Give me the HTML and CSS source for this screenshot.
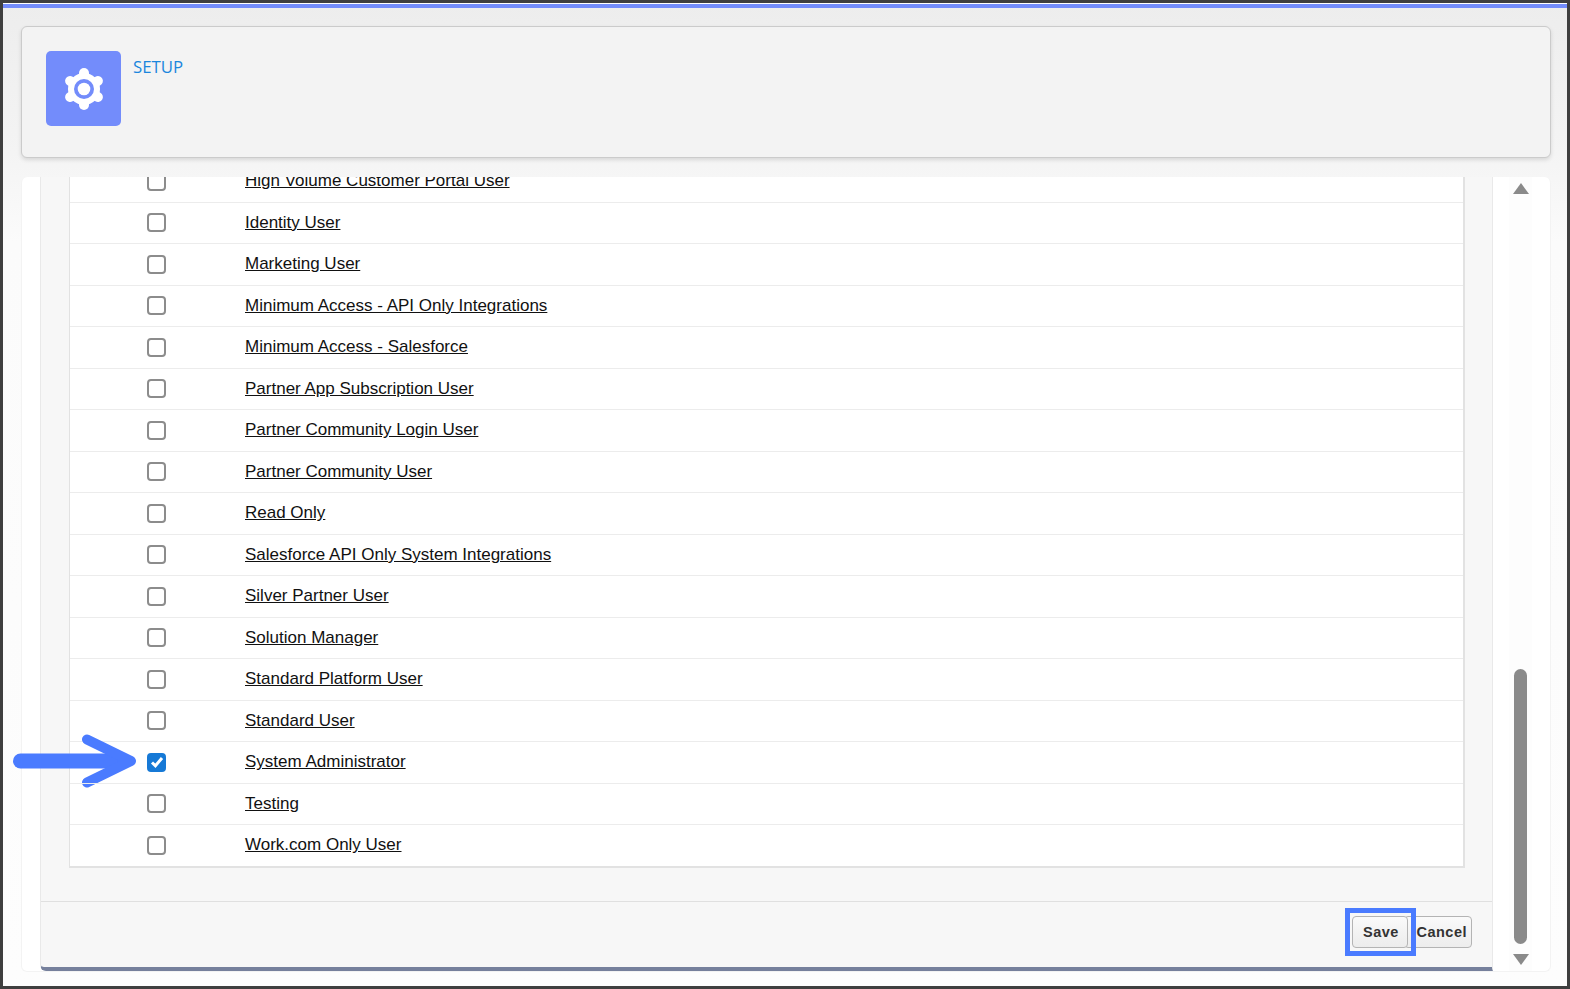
FILE: index.html
```html
<!DOCTYPE html>
<html lang="en">
<head>
<meta charset="utf-8">
<title>Setup</title>
<link rel="stylesheet" href="styles.css">
</head>
<body>
<div class="frame">
  <div class="topbar"></div>
  <div class="content">
    <header class="card">
      <div class="app-icon">
        <svg width="46" height="46" viewBox="-23 -23 46 46" aria-hidden="true">
          <circle r="16" fill="#fff"/>
          <g stroke="#fff" stroke-width="10" stroke-linecap="round">
            <line x1="0" y1="-10" x2="0" y2="-16"/>
            <line x1="0" y1="10" x2="0" y2="16"/>
            <line x1="8.7" y1="-5" x2="13.9" y2="-8"/>
            <line x1="-8.7" y1="-5" x2="-13.9" y2="-8"/>
            <line x1="8.7" y1="5" x2="13.9" y2="8"/>
            <line x1="-8.7" y1="5" x2="-13.9" y2="8"/>
          </g>
          <circle r="10" fill="#738cfb"/>
          <circle r="6.3" fill="#fff"/>
        </svg>
      </div>
      <a class="setup-link">SETUP</a>
    </header>
    <main class="panel">
      <section class="modal">
        <div class="scroll-body">
          <ul class="table">
            <li class="row"><span class="cb"></span><a class="name">High Volume Customer Portal User</a></li>
            <li class="row"><span class="cb"></span><a class="name">Identity User</a></li>
            <li class="row"><span class="cb"></span><a class="name">Marketing User</a></li>
            <li class="row"><span class="cb"></span><a class="name">Minimum Access - API Only Integrations</a></li>
            <li class="row"><span class="cb"></span><a class="name">Minimum Access - Salesforce</a></li>
            <li class="row"><span class="cb"></span><a class="name">Partner App Subscription User</a></li>
            <li class="row"><span class="cb"></span><a class="name">Partner Community Login User</a></li>
            <li class="row"><span class="cb"></span><a class="name">Partner Community User</a></li>
            <li class="row"><span class="cb"></span><a class="name">Read Only</a></li>
            <li class="row"><span class="cb"></span><a class="name">Salesforce API Only System Integrations</a></li>
            <li class="row"><span class="cb"></span><a class="name">Silver Partner User</a></li>
            <li class="row"><span class="cb"></span><a class="name">Solution Manager</a></li>
            <li class="row"><span class="cb"></span><a class="name">Standard Platform User</a></li>
            <li class="row"><span class="cb"></span><a class="name">Standard User</a></li>
            <li class="row">
              <svg class="arrow" width="130" height="60" viewBox="0 0 130 60" aria-hidden="true">
                <path d="M10.5 30H112" fill="none" stroke="#4a7bff" stroke-width="15" stroke-linecap="round"/>
                <path d="M77 8.5L121 30L77 51.5" fill="none" stroke="#4a7bff" stroke-width="10" stroke-linecap="round" stroke-linejoin="round"/>
              </svg>
              <span class="cb checked">
                <svg width="14" height="14" viewBox="0 0 14 14" aria-hidden="true"><path d="M2 7.5L5.4 10.8L12 3" fill="none" stroke="#fff" stroke-width="3"/></svg>
              </span>
              <a class="name">System Administrator</a>
            </li>
            <li class="row"><span class="cb"></span><a class="name">Testing</a></li>
            <li class="row"><span class="cb"></span><a class="name">Work.com Only User</a></li>
          </ul>
        </div>
        <footer class="footer">
          <button class="btn save" type="button">Save<span class="highlight"></span></button>
          <button class="btn cancel" type="button">Cancel</button>
        </footer>
      </section>
      <aside class="scrollbar">
        <span class="tri up"></span>
        <span class="spacer"></span>
        <span class="thumb"></span>
        <span class="tri down"></span>
      </aside>
    </main>
  </div>
</div>
</body>
</html>
```

FILE: styles.css
```css
* { box-sizing: border-box; }
html, body { margin: 0; padding: 0; height: 100%; overflow: hidden; }
body { font-family: "Liberation Sans", Arial, sans-serif; background: #fff; }

.frame {
  width: 1570px;
  height: 989px;
  border-style: solid;
  border-color: #3f3f3f;
  border-width: 3px 3px 3px 3px;
  display: flex;
  flex-direction: column;
  background: linear-gradient(#ededed 0, #f4f4f4 150px, #fbfbfb 240px, #fdfdfd 100%);
}
.topbar { height: 5px; border-top: 1px solid #fff; background: #738cfb; flex: none; }
.content {
  flex: 1;
  display: flex;
  flex-direction: column;
  padding: 18px 16px 14px 18px;
  gap: 19px;
  min-height: 0;
}

.card {
  height: 132px;
  flex: none;
  display: flex;
  align-items: flex-start;
  gap: 12px;
  padding: 24px;
  background: #f3f3f3;
  border: 1px solid #cbcbcb;
  border-radius: 6px;
  box-shadow: 0 2px 4px rgba(0,0,0,.12);
}
.app-icon {
  width: 75px;
  height: 75px;
  background: #738cfb;
  border-radius: 5px;
  display: flex;
  align-items: center;
  justify-content: center;
  flex: none;
}
.setup-link {
  font-family: "Open Sans", sans-serif;
  font-size: 16.8px;
  line-height: 24px;
  margin-top: 4px;
  color: #1a86dd;
}

.panel {
  flex: 1;
  min-height: 0;
  display: flex;
  background: #fff;
  border: 1px solid #f3f3f3;
  border-top: 0;
  border-radius: 6px;
  padding-left: 18px;
}
.modal {
  width: 1453px;
  flex: none;
  display: flex;
  flex-direction: column;
  background: #f7f7f7;
  border-left: 1px solid #e9e9e9;
  border-right: 1px solid #e9e9e9;
  border-bottom: 4px solid #76809c;
  border-bottom-left-radius: 6px;
}
.scroll-body {
  flex: 1;
  min-height: 0;
  display: flex;
  flex-direction: column;
  justify-content: flex-end;
  padding: 0 27px 33px 28px;
  clip-path: inset(0 -100px 0 -100px);
}
.table {
  list-style: none;
  margin: 0;
  padding: 0 0 0.5px;
  background: #fff;
  border-left: 1px solid #e2e2e2;
  border-right: 2px solid #e2e2e2;
  border-bottom: 2px solid #e2e2e2;
  flex: none;
}
.row {
  position: relative;
  height: 41.5px;
  display: flex;
  align-items: center;
  padding-left: 77px;
  border-top: 1px solid #ececec;
}
.cb {
  width: 19px;
  height: 19px;
  flex: none;
  border: 2px solid #8c8c8c;
  border-radius: 4px;
  background: #fff;
  display: flex;
  align-items: center;
  justify-content: center;
}
.cb.checked { background: #1679d6; border-color: #1679d6; }
.name {
  margin-left: 79px;
  font-size: 17px;
  color: #111;
  text-decoration: underline;
  white-space: nowrap;
}
.arrow {
  position: absolute;
  left: -60px;
  top: -11px;
  pointer-events: none;
}

.footer {
  height: 66px;
  flex: none;
  display: flex;
  justify-content: flex-end;
  align-items: flex-start;
  padding: 14px 20px 0 0;
  border-top: 1px solid #e0e0e0;
}
.btn {
  position: relative;
  height: 32px;
  font-family: "Liberation Sans", Arial, sans-serif;
  font-weight: 700;
  font-size: 14.5px;
  letter-spacing: .5px;
  color: #333;
  border: 1px solid #b4b4b4;
  border-radius: 4px;
  background: linear-gradient(#fafafa, #ececec);
  padding: 0;
}
.save { width: 56px; z-index: 1; padding-left: 2px; }
.cancel { width: 68px; margin-left: -4px; text-align: right; padding-right: 4px; background: linear-gradient(#fafafa, #ededed); }
.highlight {
  position: absolute;
  left: -8px;
  right: -9px;
  top: -9px;
  bottom: -9px;
  border: 5px solid #4a7bff;
}

.scrollbar {
  width: 23px;
  margin-left: 16px;
  flex: none;
  display: flex;
  flex-direction: column;
  align-items: center;
  background: #fdfdfd;
  padding: 6px 0 6px;
}
.spacer { flex: 1; }
.tri { width: 0; height: 0; border-left: 8px solid transparent; border-right: 8px solid transparent; flex: none; }
.tri.up { border-bottom: 11px solid #8a8a8a; }
.tri.down { border-top: 11px solid #8a8a8a; margin-top: 10px; }
.thumb { width: 13px; height: 275px; background: #8a8a8a; border-radius: 7px; flex: none; }
```
